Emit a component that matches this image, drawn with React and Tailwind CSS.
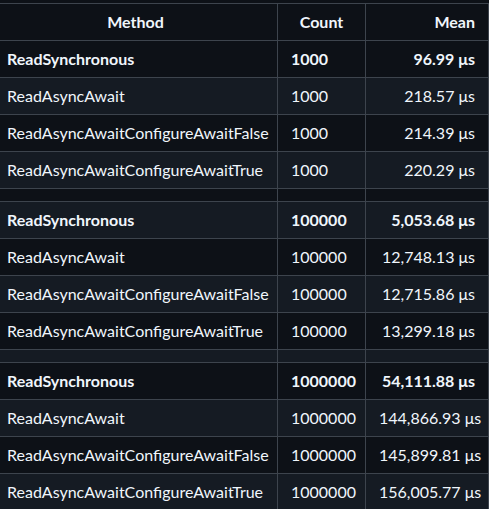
import React from 'react';

const groups = [
  {
    count: '1000',
    rows: [
      ['ReadSynchronous', '96.99 μs'],
      ['ReadAsyncAwait', '218.57 μs'],
      ['ReadAsyncAwaitConfigureAwaitFalse', '214.39 μs'],
      ['ReadAsyncAwaitConfigureAwaitTrue', '220.29 μs'],
    ],
  },
  {
    count: '100000',
    rows: [
      ['ReadSynchronous', '5,053.68 μs'],
      ['ReadAsyncAwait', '12,748.13 μs'],
      ['ReadAsyncAwaitConfigureAwaitFalse', '12,715.86 μs'],
      ['ReadAsyncAwaitConfigureAwaitTrue', '13,299.18 μs'],
    ],
  },
  {
    count: '1000000',
    rows: [
      ['ReadSynchronous', '54,111.88 μs'],
      ['ReadAsyncAwait', '144,866.93 μs'],
      ['ReadAsyncAwaitConfigureAwaitFalse', '145,899.81 μs'],
      ['ReadAsyncAwaitConfigureAwaitTrue', '156,005.77 μs'],
    ],
  },
];

const cell = 'border border-[#3d444d] px-[13px] py-[6px] overflow-hidden';

export default function App() {
  // flatten with blank spacer rows between groups, like the markdown source
  const rows = [];
  groups.forEach((g, gi) => {
    if (gi > 0) rows.push({ blank: true });
    g.rows.forEach(([method, mean], i) => rows.push({ method, count: g.count, mean, bold: i === 0 }));
  });

  return (
    <div
      className="h-[509px] w-[489px] overflow-hidden bg-[#0d1117] pt-[3px] text-[16px] leading-6 text-[#f0f6fc]"
      style={{ fontFamily: 'Lato, "Noto Sans", sans-serif' }}
    >
      <table className="ml-[-7px] w-[495px] table-fixed border-collapse">
        <thead>
          <tr className="bg-[#0d1117]">
            <th className={`${cell} w-[284px] text-center font-bold`}>Method</th>
            <th className={`${cell} w-[88px] text-center font-bold`}>Count</th>
            <th className={`${cell} w-[123px] text-right font-bold`}>Mean</th>
          </tr>
        </thead>
        <tbody>
          {rows.map((r, i) => (
            <tr key={i} className={i % 2 === 1 ? 'bg-[#151b23]' : 'bg-[#0d1117]'}>
              {r.blank ? (
                <>
                  <td className={`${cell} h-[13px] py-0`} />
                  <td className={`${cell} h-[13px] py-0`} />
                  <td className={`${cell} h-[13px] py-0`} />
                </>
              ) : (
                <>
                  <td className={`${cell} whitespace-nowrap ${r.bold ? 'font-bold' : ''}`}>{r.method}</td>
                  <td className={`${cell} text-left ${r.bold ? 'font-bold' : ''}`}>{r.count}</td>
                  <td className={`${cell} text-right whitespace-nowrap ${r.bold ? 'font-bold' : ''}`}>{r.mean}</td>
                </>
              )}
            </tr>
          ))}
        </tbody>
      </table>
    </div>
  );
}
